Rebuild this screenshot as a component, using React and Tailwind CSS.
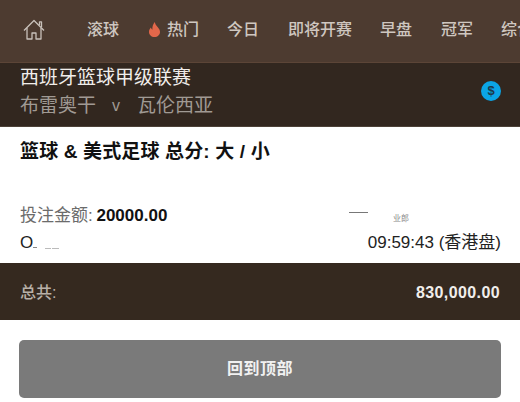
const cjk = { fontFamily: '"Liberation Sans","Noto Sans CJK SC",sans-serif' };

function Nav({ children, className = "" }) {
  return <span className={"text-[16px] font-medium text-[#cfc7c0] whitespace-nowrap shrink-0 " + className}>{children}</span>;
}

export default function App() {
  return (
    <div className="w-[520px] h-[402px] overflow-hidden bg-white flex flex-col" style={cjk}>
      <div className="h-[63px] shrink-0 bg-[#4d3b30] border-b border-[#5c4537] flex items-center pl-[23px] pb-[3px]">
        <svg width="22" height="22" viewBox="0 0 22 22" fill="none" stroke="#c9c1ba" strokeWidth="1.3" strokeLinejoin="round" className="shrink-0">
          <path d="M1 11.500 11 1.500l10 10" />
          <path d="M4 9v11h5v-6h4v6h5V9" />
          <path d="M16.500 6V2.800h2V8" />
        </svg>
        <Nav className="ml-[42px]">滚球</Nav>
        <svg width="13" height="15" viewBox="0 0 13 15" className="ml-[29px] shrink-0">
          <path d="M6.800 0c.5 2.600 1.600 3.600 3 5.300 1.400 1.700 2.200 3 2.200 4.700 0 2.900-2.400 5-5.500 5S1 12.900 1 10c0-1.800.8-3.200 1.900-4.400.2 1.100.7 1.800 1.500 2.200C4.200 4.800 5 2 6.800 0Z" fill="#e2674a" />
        </svg>
        <Nav className="ml-[6px]">热门</Nav>
        <Nav className="ml-[28px]">今日</Nav>
        <Nav className="ml-[29px]">即将开赛</Nav>
        <Nav className="ml-[28px]">早盘</Nav>
        <Nav className="ml-[29px]">冠军</Nav>
        <span className="ml-[28px] w-[19px] overflow-hidden shrink-0 flex">
          <Nav>综合</Nav>
        </span>
      </div>

      <div className="h-[64px] shrink-0 bg-[#32271f] flex items-center justify-between pl-5 pr-[19px] border-b border-[#4d4238]">
        <div className="flex flex-col -mt-[5px]">
          <div className="text-[19px] leading-[28px] text-[#f1eeeb]">西班牙篮球甲级联赛</div>
          <div className="text-[19px] leading-[28px] text-[#a09a94] flex">
            <span>布雷奥干</span>
            <span className="ml-[16px] mr-[17px] text-[16px]">v</span>
            <span>瓦伦西亚</span>
          </div>
        </div>
        <div className="w-5 h-5 -mt-[8px] rounded-full bg-[#0ba5e6] flex items-center justify-center text-[13px] font-bold text-[#1d3a4c]">$</div>
      </div>

      <div className="h-[136px] shrink-0 bg-white flex flex-col px-5 text-[#1a1a1a]">
        <div className="mt-[13px] text-[19px] leading-6 font-bold text-[#111] tracking-[0.15px]">篮球 &amp; 美式足球 总分: 大 / 小</div>
        <div className="mt-[38px] h-[26px] flex items-end justify-between">
          <div className="text-[17px] leading-[24px] text-[#6b6b6b]">
            投注金额: <span className="-ml-px font-bold text-[#111]">20000.00</span>
          </div>
          <div className="flex flex-col items-start w-[64px] mr-[87px] mb-[5px]">
            <div className="h-px w-[19px] bg-[#777]" />
            <div className="text-[8px] leading-[9px] text-[#888] ml-[44px] mt-[1px] whitespace-nowrap">业郎</div>
          </div>
        </div>
        <div className="mt-[3px] flex items-center justify-between text-[17px] leading-[24px] text-[#222]">
          <div className="flex items-end">
            <span>O</span>
            <span className="w-[4px] h-px bg-[#888] mb-[7px]" />
            <span className="w-[6px] h-px bg-[#bbb] ml-[8px] mb-[6px]" />
            <span className="w-[7px] h-px bg-[#bbb] ml-[1px] mb-[6px]" />
          </div>
          <span className="translate-x-px">09:59:43 (香港盘)</span>
        </div>
      </div>

      <div className="h-[57px] shrink-0 bg-[#35291f] flex items-center justify-between px-5 pt-[2px]">
        <span className="text-[16px] font-medium text-[#b9b1a9]">总共:</span>
        <span className="text-[16px] font-bold text-[#f1eeeb] tracking-[0.4px]">830,000.00</span>
      </div>

      <div className="flex-1 px-[19px] pt-5">
        <button className="w-[482px] h-[58px] rounded-[5px] bg-[#7a7a7a] text-[16px] font-bold text-[#f1f1f1] tracking-[0.5px]">回到顶部</button>
      </div>
    </div>
  );
}
